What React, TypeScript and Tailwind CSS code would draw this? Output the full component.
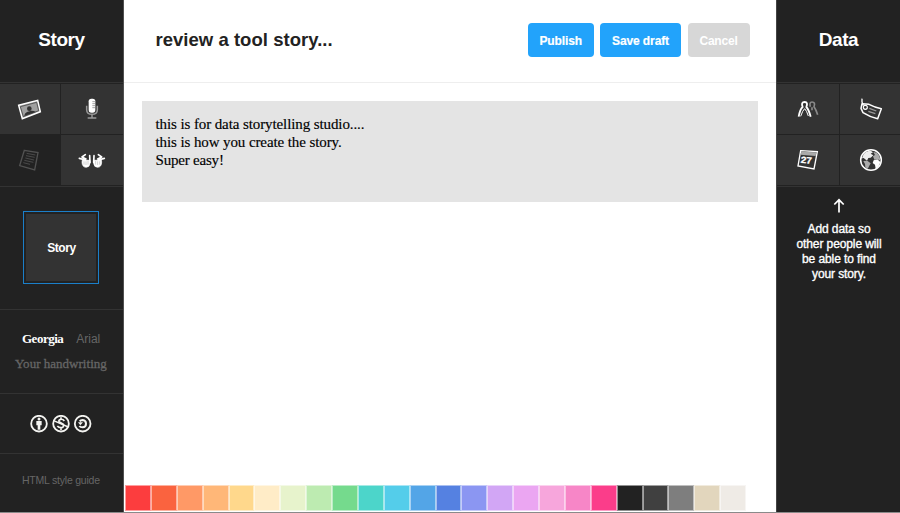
import React from "react";

const SANS = "font-['Liberation_Sans',Arial,sans-serif]";
const SERIF = "font-['Liberation_Serif',Georgia,serif]";

const swatches = [
  "#fc3d3e", "#fa633f", "#ff9966", "#ffb778", "#ffd88c", "#ffecc7",
  "#e7f3cc", "#bdebb1", "#75da8d", "#4cd5ca", "#54cdea", "#53a5e7",
  "#5581e1", "#8b96f2", "#d2a6f5", "#eba6f2", "#f7a6dc", "#f786c7",
  "#fb3d8a", "#222222", "#404040", "#7e7e7e", "#e2d6bd", "#efebe6",
];

function PhotoIcon() {
  return (
    <svg width="60" height="50" viewBox="0 18 180 150">
      <path d="M56 82 L113 67 L121 101 L67 122 Z" fill="#a0a0a0" stroke="#fff" strokeWidth="4.5" />
      <path d="M61 86 L110 73 L116 98 L70 116 Z" fill="none" stroke="#333" strokeWidth="2" />
      <circle cx="88" cy="92" r="7" fill="#333" />
      <path d="M73 114 Q74 104 83 101 L94 98 Q103 98 107 102 Z" fill="#333" />
    </svg>
  );
}

function MicIcon() {
  return (
    <svg width="62" height="50" viewBox="183 18 186 150">
      <rect x="266" y="62" width="20" height="42" rx="8" fill="#fff" />
      <path d="M277 71h9M277 77h9M277 83h9M277 89h9" stroke="#777" strokeWidth="2" />
      <path d="M260 83v12q0 14 16 14t16-14V83M276 109v10M263 120h26" fill="none" stroke="#999" strokeWidth="4.5" />
    </svg>
  );
}

function NoteIcon() {
  return (
    <svg width="60" height="50" viewBox="0 171 180 150">
      <g fill="none" stroke="#525252">
        <path d="M73 217 L114 224 L104 276 L59 263 Z" strokeWidth="4" />
        <path d="M80 226l26 5M78 233l26 5M76 240l26 6M73 247l27 6M70 254l20 5" strokeWidth="2.5" />
      </g>
    </svg>
  );
}

function Hand() {
  return (
    <>
      <path d="M247 246 L270 247 L270 256 Q269 268 258 268 Q246 267 246 252 Z" fill="#fff" stroke="#fff" strokeWidth="2" />
      <path d="M270 253 L269 233" stroke="#fff" strokeWidth="5" strokeLinecap="round" />
      <path d="M256 230 L246 237 L258 243 M238 241 L256 246" fill="none" stroke="#fff" strokeWidth="5" strokeLinecap="round" strokeLinejoin="round" />
      <path d="M252 250v10M258 250v11M264 249v11" stroke="#999" strokeWidth="1.4" />
    </>
  );
}

function HandsIcon() {
  return (
    <svg width="62" height="50" viewBox="183 171 186 150">
      <Hand />
      <g transform="translate(551 0) scale(-1 1)"><Hand /></g>
    </svg>
  );
}

function PeopleIcon() {
  return (
    <svg width="62" height="50" viewBox="21 18 186 150">
      <g fill="none" strokeLinejoin="round">
        <path d="M121 86 Q117 72 126 72 Q137 72 132 86 Q138 94 143 110 M126 88v9" stroke="#8a8a8a" strokeWidth="5" />
        <path d="M86 116 Q90 94 98 87 Q92 72 104 72 Q115 72 109 87 Q116 94 122 116" stroke="#fff" strokeWidth="5.5" />
        <path d="M92 115 Q98 97 104 92 Q110 98 115 114" stroke="#fff" strokeWidth="3" />
      </g>
    </svg>
  );
}

function TagIcon() {
  return (
    <svg width="60" height="50" viewBox="210 18 180 150">
      <g fill="none" stroke="#fff" strokeWidth="4.5" strokeLinejoin="round">
        <path d="M276 77 L297 79 Q316 89 334 92 L323 122 Q299 117 279 104 L273 91 Z" />
        <path d="M276 62 Q274 73 280 83" strokeWidth="4" />
        <circle cx="286" cy="88" r="6" strokeWidth="3.5" />
        <path d="M298 91 L319 99M295 100 L316 107" stroke="#999" strokeWidth="4" />
      </g>
    </svg>
  );
}

function CalendarIcon() {
  return (
    <svg width="62" height="50" viewBox="21 171 186 150">
      <path d="M92 218 L142 221 L132 273 L84 264 Z" fill="#333" stroke="#fff" strokeWidth="4" />
      <path d="M94 221 L139 223 L137 234 L91 230 Z" fill="#aaa" />
      <text x="92" y="256" transform="rotate(5 108 248)" fill="#fff" stroke="#fff" strokeWidth="0.8" fontSize="27" fontWeight="bold" fontFamily="Liberation Sans" textLength="34" lengthAdjust="spacingAndGlyphs">27</text>
    </svg>
  );
}

function GlobeIcon() {
  return (
    <svg width="60" height="50" viewBox="210 171 180 150">
      <circle cx="303" cy="246" r="31" fill="#333" stroke="#fff" strokeWidth="4.5" />
      <path d="M281 228 Q288 219 302 218 L309 223 L302 227 L310 232 L302 239 L295 240 L291 248 L281 240 L276 241 Z" fill="#eee" />
      <path d="M280 249 L292 248 L302 256 L298 263 L293 273 L286 267 L285 258 Z" fill="#aaa" />
      <path d="M310 222 L321 224 Q331 234 332 248 L321 243 L313 245 L309 235 L315 231 Z" fill="#aaa" />
      <path d="M311 247 L322 244 L331 252 Q328 266 317 272 L315 260 L308 255 Z" fill="#fff" />
    </svg>
  );
}

function Licences() {
  return (
    <svg width="62" height="18" viewBox="91 74 186 54" fill="none" stroke="#f4f4f1">
      <circle cx="118" cy="100" r="23.5" strokeWidth="5.5" />
      <circle cx="184" cy="100" r="23.5" strokeWidth="5.5" />
      <circle cx="249" cy="100" r="23.5" strokeWidth="5.5" />
      <circle cx="118" cy="86" r="4.5" fill="#f4f4f1" stroke="none" />
      <path d="M110 92h16v13h-4v13h-8v-13h-4z" fill="#f4f4f1" stroke="none" />
      <path d="M194 92 Q190 86 183 87 Q176 89 178 94 L191 102 Q194 111 184 112 Q177 112 173 107M184 81v7M184 111v8" strokeWidth="5" />
      <path d="M162 91 L206 110" strokeWidth="4.5" />
      <path d="M240 93 Q243 89 249 89 Q259 90 259 100 Q259 110 249 111 Q242 111 239 107" strokeWidth="6" />
      <path d="M235 96 L250 96 L242 105 Z" fill="#f4f4f1" stroke="none" />
    </svg>
  );
}

function SideTitle({ children }: { children: React.ReactNode }) {
  return (
    <h2 className="flex h-[82px] items-center justify-center pb-[2px] text-[19px] font-bold tracking-[-0.45px] text-white">
      {children}
    </h2>
  );
}

export default function App() {
  return (
    <div className={`flex h-[513px] w-[900px] flex-col overflow-hidden bg-white ${SANS}`}>
      <div className="flex h-[512px]">
        <aside className="flex w-[124px] shrink-0 flex-col border-r border-[#505050] bg-[#222]">
          <SideTitle>Story</SideTitle>
          <div className="grid h-[105px] shrink-0 grid-cols-[60px_62px] grid-rows-[50px_50px] gap-px border-y border-[#333] pt-px">
            <div className="bg-[#333]"><PhotoIcon /></div>
            <div className="bg-[#333]"><MicIcon /></div>
            <div><NoteIcon /></div>
            <div className="bg-[#333]"><HandsIcon /></div>
          </div>
          <div className="flex h-[123px] shrink-0 justify-center border-b border-[#333] pr-px pt-[24px]">
            <div className="flex h-[73px] w-[76px] border border-[#1b7fc9] p-[2px]">
              <div className="flex flex-1 items-center justify-center bg-[#333] pl-px text-[12px] font-bold tracking-[-0.4px] text-white">
                Story
              </div>
            </div>
          </div>
          <div className={`h-[84px] shrink-0 border-b border-[#333] pt-[20px] ${SERIF}`}>
            <div className="flex h-[18px] items-center gap-[13px] pl-[22px]">
              <span className="text-[13px] font-bold tracking-[-0.5px] text-white">Georgia</span>
              <span className={`text-[12px] text-[#666] ${SANS}`}>Arial</span>
            </div>
            <div className="mt-[7px] h-[18px] whitespace-nowrap pl-[15px] text-[13px] leading-[18px] tracking-[0.02px] text-[#666] [-webkit-text-stroke:0.3px_#666]">
              Your handwriting
            </div>
          </div>
          <div className="flex h-[60px] shrink-0 items-center border-b border-[#333] pl-[30px]">
            <Licences />
          </div>
          <div className="flex flex-1 items-center whitespace-nowrap pb-[5px] pl-[22px] text-[10.5px] tracking-[-0.22px] text-[#666]">
            HTML style guide
          </div>
        </aside>

        <main className="flex w-[652px] shrink-0 flex-col">
          <header className="flex h-[83px] shrink-0 items-center border-b border-[#eee] pb-[2px] pl-[31.5px] pr-[26.5px]">
            <h1 className="flex-1 text-[18.5px] font-bold tracking-[0.03px] text-[#222]">review a tool story...</h1>
            <div className="flex gap-[6.5px] text-[12px] font-bold text-white">
              <button className="h-[34px] w-[65.5px] rounded-[4px] bg-[#22a3fb] pt-px tracking-[-0.1px] [-webkit-text-stroke:0.2px_#fff]">Publish</button>
              <button className="h-[34px] w-[81px] rounded-[4px] bg-[#22a3fb] pt-px tracking-[-0.1px] [-webkit-text-stroke:0.2px_#fff]">Save draft</button>
              <button className="h-[34px] w-[62px] rounded-[4px] bg-[#d7d7d7] pt-px tracking-[-0.2px]">Cancel</button>
            </div>
          </header>
          <div className="flex-1 px-[18px] pt-[18px]">
            <div className={`h-[101px] bg-[#e4e4e4] pl-[13.5px] pt-[14px] text-[15px] leading-[18px] text-black [-webkit-text-stroke:0.15px_#000] ${SERIF}`}>
              <p className="tracking-[-0.1px]">this is for data storytelling studio....</p>
              <p className="tracking-[-0.1px]">this is how you create the story.</p>
              <p className="tracking-[-0.2px]">Super easy!</p>
            </div>
          </div>
          <div className="mb-px ml-px grid h-[26px] w-[621px] shrink-0 grid-cols-[repeat(24,minmax(0,1fr))]">
            {swatches.map((color) => (
              <div key={color} className="border border-white/50" style={{ backgroundColor: color }} />
            ))}
          </div>
        </main>

        <aside className="flex w-[124px] shrink-0 flex-col border-l border-[#444] bg-[#222]">
          <SideTitle>Data</SideTitle>
          <div className="grid h-[105px] shrink-0 grid-cols-[62px_60px] grid-rows-[50px_50px] gap-px border-y border-[#333] pt-px">
            <div className="bg-[#333]"><PeopleIcon /></div>
            <div className="bg-[#333]"><TagIcon /></div>
            <div className="bg-[#333]"><CalendarIcon /></div>
            <div className="bg-[#333]"><GlobeIcon /></div>
          </div>
          <div className="flex flex-col items-center pl-px pt-[11px] text-center text-[12px] leading-[15px] tracking-[-0.1px] text-white">
            <svg width="12" height="15" viewBox="0 0 12 15" fill="none" stroke="#fff" strokeWidth="1.7">
              <path d="M6 14.5V2M1.3 6.5L6 1.8l4.7 4.7" />
            </svg>
            <p className="mt-[9px] [-webkit-text-stroke:0.35px_#fff]">
              Add data so<br />other people will<br />be able to find<br />your story.
            </p>
          </div>
        </aside>
      </div>
      <div className="h-px bg-[#8a8a8a]" />
    </div>
  );
}
